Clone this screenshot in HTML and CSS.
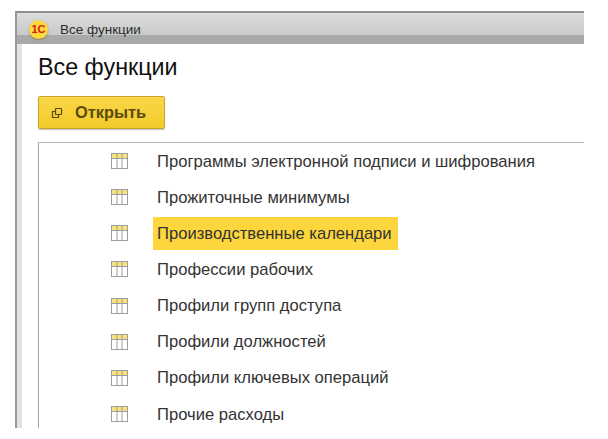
FILE: index.html
```html
<!DOCTYPE html>
<html lang="ru">
<head>
  <meta charset="UTF-8">
  <title>Все функции</title>
  <link rel="stylesheet" href="styles.css">
</head>
<body>
  <div class="window">
    <div class="titlebar">
      <span class="logo">1С</span>
      <span class="title-text">Все функции</span>
    </div>
    <div class="content">
      <h1>Все функции</h1>
      <button class="open-button">
        <svg width="12" height="12" viewBox="0 0 12 12" fill="none" stroke="#5c4a0c" stroke-width="1.2">
          <rect x="4.5" y="1.5" width="6" height="6" rx="0.5"/>
          <path d="M4 4.5H1.5V10.5H7.5V8"/>
        </svg>
        Открыть
      </button>
      <div class="list">
        <div class="row">
          <svg class="table-icon" viewBox="0 0 17 16"><use href="#tbl"/></svg>
          <span class="row-text">Программы электронной подписи и шифрования</span>
        </div>
        <div class="row">
          <svg class="table-icon" viewBox="0 0 17 16"><use href="#tbl"/></svg>
          <span class="row-text">Прожиточные минимумы</span>
        </div>
        <div class="row">
          <svg class="table-icon" viewBox="0 0 17 16"><use href="#tbl"/></svg>
          <span class="row-text selected">Производственные календари</span>
        </div>
        <div class="row">
          <svg class="table-icon" viewBox="0 0 17 16"><use href="#tbl"/></svg>
          <span class="row-text">Профессии рабочих</span>
        </div>
        <div class="row">
          <svg class="table-icon" viewBox="0 0 17 16"><use href="#tbl"/></svg>
          <span class="row-text">Профили групп доступа</span>
        </div>
        <div class="row">
          <svg class="table-icon" viewBox="0 0 17 16"><use href="#tbl"/></svg>
          <span class="row-text">Профили должностей</span>
        </div>
        <div class="row">
          <svg class="table-icon" viewBox="0 0 17 16"><use href="#tbl"/></svg>
          <span class="row-text">Профили ключевых операций</span>
        </div>
        <div class="row">
          <svg class="table-icon" viewBox="0 0 17 16"><use href="#tbl"/></svg>
          <span class="row-text">Прочие расходы</span>
        </div>
      </div>
    </div>
  </div>

  <!-- shared table icon -->
  <svg class="defs" width="0" height="0">
    <defs>
      <g id="tbl">
        <rect x="1" y="1" width="15" height="4" fill="#fbe27a"/>
        <rect x="0.5" y="0.5" width="16" height="15" fill="none" stroke="#9a9f9f"/>
        <path d="M1 5.5H16M6 1V15M11 1V15" fill="none" stroke="#9a9f9f"/>
      </g>
    </defs>
  </svg>
</body>
</html>
```

FILE: styles.css
```css
body {
  margin: 0;
  background: #fff;
  font-family: "Liberation Sans", Arial, sans-serif;
  overflow: hidden;
}

.window {
  width: 567px;
  height: 415px;
  margin: 11px 0 0 15px;
  border-left: 2px solid #999;
  border-top: 2px solid #8f8f8f;
  display: flex;
  flex-direction: column;
}

.titlebar {
  height: 31px;
  flex-shrink: 0;
  display: flex;
  align-items: center;
  background: linear-gradient(to bottom, #dcdcdc 0%, #c9caca 70%, #a9abab 72%, #a6a8a8 100%);
}

.logo {
  width: 19px;
  height: 19px;
  margin: 2px 0 0 12px;
  border-radius: 50%;
  background: #fbd93f;
  box-shadow: 0 1px 2px rgba(120, 90, 0, 0.5);
  color: #d4201a;
  font-size: 11px;
  font-weight: bold;
  line-height: 18px;
  text-align: center;
}

.title-text {
  margin: 2px 0 0 12px;
  font-size: 13.5px;
  color: #2b2b2b;
}

.content {
  flex: 1;
  min-height: 0;
  margin-left: 5px;
  background: #fff;
  box-shadow: -5px 0 0 #e2e2e2;
  padding-left: 16px;
  display: flex;
  flex-direction: column;
}

h1 {
  margin: 9px 0 0;
  font-size: 23.3px;
  font-weight: normal;
  line-height: 28px;
  color: #111;
}

.open-button {
  width: 127px;
  height: 33px;
  margin-top: 15px;
  padding: 0 0 0 12px;
  display: flex;
  align-items: center;
  gap: 12px;
  background: linear-gradient(to bottom, #f9d648, #f2cb2a);
  border: 1px solid #c7a630;
  border-radius: 2px;
  box-shadow: 0 1px 1px rgba(0, 0, 0, 0.25);
  color: #5c4a0c;
  font-family: inherit;
  font-size: 16.4px;
  font-weight: bold;
}

.list {
  flex: 1;
  min-height: 0;
  margin-top: 13px;
  border-left: 1px solid #a6a6a6;
  border-top: 1px solid #b5b5b5;
  overflow: hidden;
}

.row {
  height: 36.15px;
  display: flex;
  align-items: center;
  padding-left: 72px;
}

.table-icon {
  width: 17px;
  height: 16px;
  flex-shrink: 0;
}

.row-text {
  margin-left: 25px;
  padding: 0 4px;
  font-size: 16.6px;
  line-height: 33px;
  color: #333;
}

.selected {
  width: 245px;
  box-sizing: border-box;
  background: #fcd63c;
}

.defs {
  position: absolute;
}
```
